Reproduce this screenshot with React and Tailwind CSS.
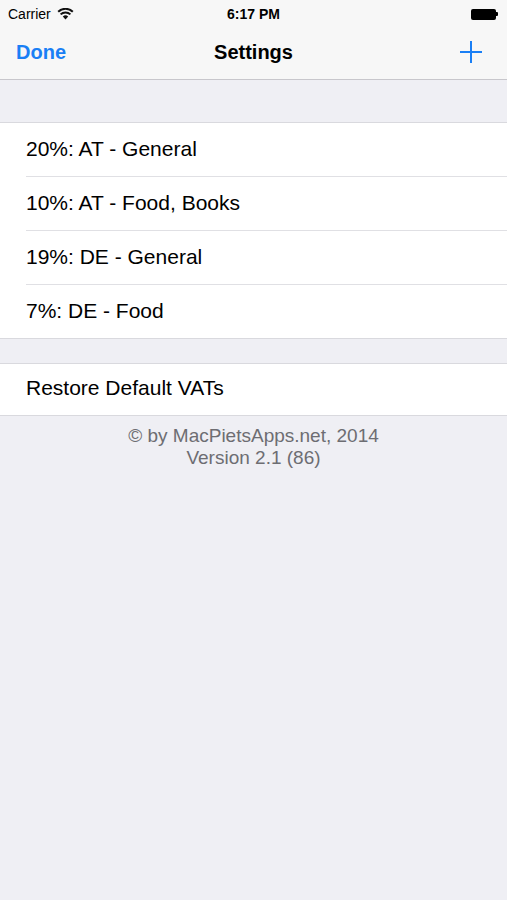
import React from 'react';

const vats = [
  '20%: AT - General',
  '10%: AT - Food, Books',
  '19%: DE - General',
  '7%: DE - Food',
];

const WifiIcon = () => (
  <svg width="17" height="12" viewBox="0 0 17 12" className="ml-[6px]">
    <path d="M8.5 11.5 L5.8 8.6 A3.9 3.9 0 0 1 11.2 8.6 Z" fill="#111" />
    <path d="M3.6 6.4 A7 7 0 0 1 13.4 6.4" stroke="#111" strokeWidth="2" fill="none" />
    <path d="M1.2 3.8 A10.4 10.4 0 0 1 15.8 3.8" stroke="#111" strokeWidth="2" fill="none" />
  </svg>
);

const Battery = () => (
  <div className="flex items-center">
    <div className="w-[25px] h-[11px] rounded-[2px] bg-black" />
    <div className="w-[2px] h-[4px] bg-black rounded-r-[1px]" />
  </div>
);

const App = () => {
  return (
    <div
      className="w-[507px] h-[900px] bg-[#efeff4] text-black"
      style={{ fontFamily: '"Liberation Sans", Arial, sans-serif' }}
    >
      {/* status + nav bar */}
      <div className="bg-[#f7f7f7] border-b border-[#c8c7cc]">
        <div className="h-[28px] flex items-center justify-between px-[8px] text-[14px] relative">
          <div className="flex items-center">
            <span>Carrier</span>
            <WifiIcon />
          </div>
          <span className="absolute left-0 right-0 text-center font-bold">6:17 PM</span>
          <div className="mr-[1px]">
            <Battery />
          </div>
        </div>
        <div className="h-[51px] pb-[3px] flex items-center justify-between relative">
          <span className="pl-[16px] text-[20px] font-bold text-[#1a7ff5]">Done</span>
          <span className="absolute left-0 right-0 text-center text-[20px] font-bold pointer-events-none">
            Settings
          </span>
          <svg width="24" height="24" viewBox="0 0 24 24" className="mr-[24px]">
            <path d="M12 1 V23 M1 12 H23" stroke="#1a7ff5" strokeWidth="2" />
          </svg>
        </div>
      </div>

      <div className="h-[42px]" />

      <div className="bg-white border-y border-[#d9d9de]">
        {vats.map((v, i) => (
          <div key={v} className="pl-[26px]">
            <div
              className={
                'flex items-center pb-[2px] text-[21px] ' +
                (i < vats.length - 1 ? 'h-[54px] border-b border-[#e0e0e4]' : 'h-[53px]')
              }
            >
              {v}
            </div>
          </div>
        ))}
      </div>

      <div className="h-[24px]" />

      <div className="bg-white border-y border-[#d9d9de] h-[53px] pb-[3px] flex items-center pl-[26px] text-[21px]">
        Restore Default VATs
      </div>

      <div className="pt-[9px] text-center text-[19px] leading-[22px] text-[#6d6d72]">
        <div>© by MacPietsApps.net, 2014</div>
        <div>Version 2.1 (86)</div>
      </div>
    </div>
  );
};

export default App;
